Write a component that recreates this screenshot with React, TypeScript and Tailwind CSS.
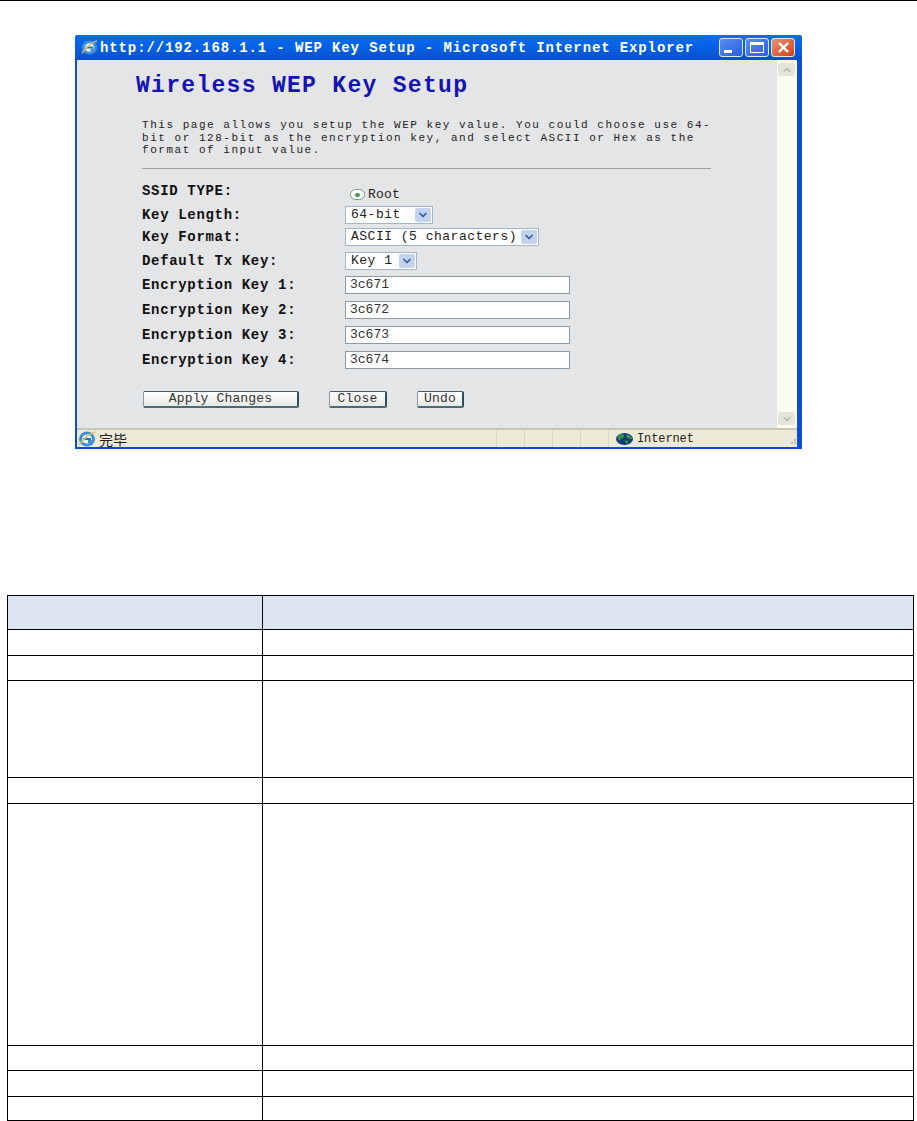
import { ChevronDown, ChevronUp } from 'lucide-react';

const mono = "font-['Liberation_Mono',monospace]";

const keys = ['3c671', '3c672', '3c673', '3c674'];
const rowHeights = ['h-[34px]', 'h-[26px]', 'h-[25px]', 'h-[97px]', 'h-[26px]', 'h-[242px]', 'h-[25px]', 'h-[26px]', 'h-[24px]'];

function IeIcon({ size }: { size: number }) {
  return (
    <svg width={size} height={size} viewBox="0 0 18 18" className="shrink-0">
      <ellipse cx="9" cy="9" rx="8" ry="7.5" fill="#3f8fd8" />
      <ellipse cx="9" cy="9" rx="5" ry="4.5" fill="#e8f2fa" />
      <rect x="5" y="8" width="8" height="2" fill="#2a6fb8" />
      <rect x="10" y="10" width="6" height="3" fill="#3f8fd8" />
      <path d="M1 15C4 11 10 4 17 2" stroke="#d8c060" strokeWidth="1.5" fill="none" />
    </svg>
  );
}

function Globe() {
  return (
    <svg width="17" height="12" viewBox="0 0 17 12" className="shrink-0">
      <ellipse cx="8.5" cy="6" rx="8.5" ry="6" fill="#123a78" />
      <path d="M2 3C5 0 8 1 8 3C8 5 5 5 4 7C3 8 1 6 2 3Z" fill="#2f9a4a" />
      <path d="M10 2C13 1 16 3 16 6C14 7 13 5 11 5Z" fill="#2f9a4a" />
      <path d="M9 8C11 7 13 8 12 10C11 11 9 10 9 8Z" fill="#2f9a4a" />
    </svg>
  );
}

function WinButton({ kind }: { kind: 'min' | 'max' | 'close' }) {
  const bg = kind === 'close' ? 'bg-gradient-to-br from-[#e8906f] to-[#cf3c14]' : 'bg-gradient-to-br from-[#5a8cf0] to-[#2a5fdc]';
  return (
    <div className={`w-[24px] h-[19px] rounded-[3px] border border-[#dfe8fa] flex items-center justify-center relative ${bg}`}>
      {kind === 'min' && <div className="absolute left-[4px] bottom-[3px] w-[8px] h-[3px] bg-white" />}
      {kind === 'max' && <div className="w-[14px] h-[11px] border border-white border-t-[3px]" />}
      {kind === 'close' && (
        <svg width="13" height="13" viewBox="0 0 13 13">
          <path d="M2 2L11 11M11 2L2 11" stroke="white" strokeWidth="2.4" />
        </svg>
      )}
    </div>
  );
}

function Select({ value, width }: { value: string; width: string }) {
  return (
    <div className={`h-[18px] border border-[#a5b5c8] bg-white flex items-center justify-between pl-[5px] pr-[1px] ${width}`}>
      <span className="text-[13px] tracking-[0.5px] text-[#222] whitespace-nowrap">{value}</span>
      <div className="w-[16px] h-[14px] rounded-[2px] bg-[#c3d3f0] flex items-center justify-center">
        <ChevronDown size={12} strokeWidth={3.5} className="text-[#3a5a9a]" />
      </div>
    </div>
  );
}

function Label({ text }: { text: string }) {
  return (
    <div className="w-[203px] shrink-0 text-[14px] tracking-[0.67px] font-bold text-[#111] whitespace-nowrap">
      {text}
    </div>
  );
}

function KeyInput({ value }: { value: string }) {
  return (
    <div className="w-[225px] h-[18px] border border-[#8c9aa6] bg-white flex items-center pl-[4px] text-[13px] text-[#333]">
      {value}
    </div>
  );
}

function PushButton({ text, width }: { text: string; width: string }) {
  return (
    <button className={`h-[17px] rounded-[2px] border border-[#8a9ba6] border-r-2 border-b-2 border-r-[#2f4f60] border-b-[#4a6a7a] border-t-[#3f5f70] bg-gradient-to-b from-white to-[#e8e8e2] text-[13px] tracking-[0.15px] text-[#333] flex items-center justify-center ${width}`}>
      {text}
    </button>
  );
}

export default function App() {
  return (
    <div className="w-[917px] h-[1121px] bg-white border-t border-black overflow-hidden">
      {/* Browser window */}
      <div className={`ml-[75px] mt-[34px] w-[727px] h-[414px] rounded-t-[3px] bg-[#0a4fd0] flex flex-col ${mono}`}>
        <div className="h-[25px] shrink-0 rounded-t-[3px] bg-gradient-to-b from-[#0a6cf0] via-[#0560e4] to-[#0a50c8] flex items-center pl-[6px] pr-[7px]">
          <IeIcon size={17} />
          <span className="ml-[2px] pt-[1px] text-[14px] font-bold tracking-[0.88px] text-white whitespace-nowrap">
            http://192.168.1.1 - WEP Key Setup - Microsoft Internet Explorer
          </span>
          <div className="ml-auto flex gap-[2px]">
            <WinButton kind="min" />
            <WinButton kind="max" />
            <WinButton kind="close" />
          </div>
        </div>

        <div className="flex-1 flex flex-col ml-[2px] mr-[5px] mb-[2px] min-h-0">
          <div className="flex-1 flex min-h-0">
            {/* Page content */}
            <div className="flex-1 bg-[#e4e5e6] pl-[65px]">
              <h1 className="mt-[15px] -ml-[6px] text-[23px] leading-[22px] font-bold tracking-[1.3px] text-[#1414b4] whitespace-nowrap">
                Wireless WEP Key Setup
              </h1>
              <p className="mt-[22px] text-[11px] leading-[12.7px] tracking-[1.53px] text-[#222] whitespace-nowrap">
                This page allows you setup the WEP key value. You could choose use 64-
                <br />
                bit or 128-bit as the encryption key, and select ASCII or Hex as the
                <br />
                format of input value.
              </p>
              <div className="mt-[11px] w-[569px] h-px bg-[#a0a0a0]" />

              <div className="mt-[12px] flex items-start h-[25px]">
                <Label text="SSID TYPE:" />
                <div className="flex items-center mt-[4px] ml-[5px]">
                  <div className="w-[15px] h-[11px] rounded-full border border-[#7f9a8a] bg-white flex items-center justify-center">
                    <div className="w-[5px] h-[4px] rounded-full bg-[#3aa04a]" />
                  </div>
                  <span className="ml-[3px] text-[13px] tracking-[0.2px] text-[#222]">Root</span>
                </div>
              </div>
              <div className="flex items-center h-[18px] mb-[4px]">
                <Label text="Key Length:" />
                <Select value="64-bit" width="w-[88px]" />
              </div>
              <div className="flex items-center h-[18px] mb-[6px]">
                <Label text="Key Format:" />
                <Select value="ASCII (5 characters)" width="w-[194px]" />
              </div>
              <div className="flex items-center h-[18px] mb-[6px]">
                <Label text="Default Tx Key:" />
                <Select value="Key 1" width="w-[72px]" />
              </div>
              <div className="flex flex-col gap-[7px]">
                {keys.map((key, i) => (
                  <div key={key} className="flex items-center h-[18px]">
                    <Label text={`Encryption Key ${i + 1}:`} />
                    <KeyInput value={key} />
                  </div>
                ))}
              </div>
              <div className="mt-[22px] ml-[1px] flex">
                <PushButton text="Apply Changes" width="w-[156px]" />
                <div className="w-[30px]" />
                <PushButton text="Close" width="w-[58px]" />
                <div className="w-[30px]" />
                <PushButton text="Undo" width="w-[47px]" />
              </div>
            </div>

            {/* Scrollbar */}
            <div className="w-[20px] bg-[#fbfbf2] flex flex-col justify-between pt-[3px] pb-[3px] pl-[1px] pr-[2px]">
              <div className="h-[13px] rounded-[2px] bg-[#e4e6dc] flex items-center justify-center">
                <ChevronUp size={12} strokeWidth={3} className="text-[#b5b8ac]" />
              </div>
              <div className="h-[13px] rounded-[2px] bg-[#e4e6dc] flex items-center justify-center">
                <ChevronDown size={12} strokeWidth={3} className="text-[#b5b8ac]" />
              </div>
            </div>
          </div>

          {/* Status bar */}
          <div className="h-[19px] shrink-0 bg-[#ece9d8] border-t-2 border-[#c9c6b4] flex items-center text-[12px] text-[#222] pl-[1px]">
            <IeIcon size={18} />
            <span className="ml-[3px] w-[397px] shrink-0 font-['Noto_Sans_CJK_SC',sans-serif] text-[14px] leading-none">完毕</span>
            {[0, 1, 2, 3].map((i) => (
              <div key={i} className="w-[28px] h-full shrink-0 border-l border-[#d8d5c4]" />
            ))}
            <div className="h-full flex-1 border-l border-[#d8d5c4] pl-[7px] flex items-center">
              <Globe />
              <span className="ml-[4px] text-[12px] tracking-[-0.1px]">Internet</span>
              <div className="ml-auto mr-[1px] mt-[6px] grid grid-cols-3 gap-[1px]">
                <div className="w-[2px] h-[2px]" />
                <div className="w-[2px] h-[2px]" />
                <div className="w-[2px] h-[2px] bg-[#c0bda8]" />
                <div className="w-[2px] h-[2px]" />
                <div className="w-[2px] h-[2px] bg-[#c0bda8]" />
                <div className="w-[2px] h-[2px] bg-[#c0bda8]" />
              </div>
            </div>
          </div>
        </div>
      </div>

      {/* Parameter table */}
      <table className="mt-[146px] ml-[7px] w-[907px] table-fixed border-collapse">
        <colgroup>
          <col className="w-[255px]" />
          <col />
        </colgroup>
        <tbody>
          {rowHeights.map((h, i) => (
            <tr key={i} className={`${h} ${i === 0 ? 'bg-[#dbe5f1]' : ''}`}>
              <td className="border border-black p-0" />
              <td className="border border-black p-0" />
            </tr>
          ))}
        </tbody>
      </table>
    </div>
  );
}
